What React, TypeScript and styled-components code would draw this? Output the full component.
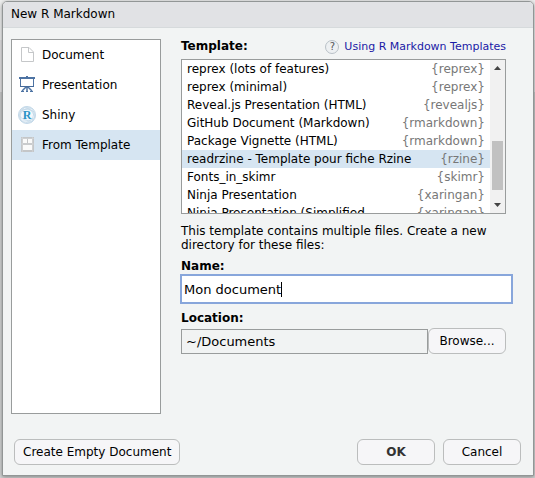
import React, { useState } from "react";
import styled, { createGlobalStyle } from "styled-components";

const GlobalStyle = createGlobalStyle`
  *, *::before, *::after { box-sizing: border-box; }
  html, body, #root { height: 100%; }
  body {
    margin: 0;
    background: linear-gradient(#eeefef 0 40px, #e1e2e3 40px 92px, #c9cbcb 92px 160px, #d3d5d5 160px);
    color: #000;
    font: 12px/14px "DejaVu Sans", Verdana, sans-serif;
  }
  button, input { font: inherit; color: inherit; margin: 0; }
`;

const Screen = styled.div`
  display: flex;
  min-height: 100%;
  padding: 1px 1px 2px 2px;
`;

const Dialog = styled.form`
  flex: 1;
  min-width: 0;
  display: flex;
  flex-direction: column;
  border: 1px solid #929696;
  border-radius: 5px 5px 0 0;
  background: #f2f4f4;
  box-shadow: 0 1px 4px rgba(0, 0, 0, 0.4);
`;

const TitleBar = styled.h1`
  margin: 0;
  padding: 5px 8px 6px;
  border-bottom: 1px solid #d6dadc;
  border-radius: 4px 4px 0 0;
  background: #e1e2e5;
  font-size: 12px;
  line-height: 14px;
  font-weight: normal;
`;

const Body = styled.div`
  flex: 1;
  display: flex;
  gap: 20px;
  padding: 11px 20px 25px 8px;
`;

const KindList = styled.div`
  flex: 0 0 150px;
  border: 1px solid #999c9c;
  background: #fff;
`;

const KindButton = styled.button<{ $selected: boolean }>`
  display: flex;
  align-items: center;
  gap: 5px;
  width: 100%;
  height: 30px;
  padding: 0 5px;
  border: 0;
  background: ${(p) => (p.$selected ? "#d6e5f2" : "transparent")};
  text-align: left;

  svg { flex: none; }
`;

const Fields = styled.div`
  flex: 1;
  min-width: 0;
  display: flex;
  flex-direction: column;
  align-items: stretch;
`;

const Section = styled.div`
  display: flex;
  flex-direction: column;
  margin-right: 7px;
`;

const Header = styled.div`
  display: flex;
  align-items: center;
  justify-content: space-between;
  height: 20px;
`;

const Caption = styled.label`
  font-weight: bold;
  line-height: 14px;
`;

const TemplateCaption = styled.span`
  font-weight: bold;
  padding-bottom: 6px;
`;

const HelpLink = styled.a`
  display: flex;
  align-items: center;
  gap: 5px;
  padding-bottom: 4px;
  color: #1a1aa6;
  font-size: 11px;
  text-decoration: none;
`;

const HelpMark = styled.span`
  display: grid;
  place-items: center;
  width: 14px;
  height: 14px;
  border: 1px solid #b9c1c7;
  border-radius: 50%;
  background: #edf0f2;
  color: #555;
  font-size: 10px;
  line-height: 12px;
`;

const TemplateBox = styled.div`
  display: flex;
  height: 155px;
  border: 1px solid #999c9c;
  background: #fff;
`;

const Templates = styled.div`
  flex: 1;
  min-width: 0;
  overflow: hidden;
`;

const TemplateRow = styled.button<{ $selected: boolean }>`
  display: flex;
  justify-content: space-between;
  gap: 8px;
  width: 100%;
  height: 18px;
  padding: 2px 5px;
  border: 0;
  background: ${(p) => (p.$selected ? "#d6e5f2" : "transparent")};
  text-align: left;
  line-height: 14px;
  white-space: nowrap;
`;

const PackageName = styled.span`
  color: #777;
`;

const ScrollTrack = styled.div`
  flex: 0 0 15px;
  display: flex;
  flex-direction: column;
  align-items: center;
  padding: 6px 0;
  background: #f1f1f1;
`;

const ScrollThumb = styled.div`
  width: 11px;
  height: 49px;
  margin: auto 0 13px;
  background: #c1c1c1;
`;

const Note = styled.p`
  margin: 10px 0 7px;
`;

const NameField = styled.div`
  position: relative;
  margin: 1px 0 7px -1px;
`;

const NameInput = styled.input`
  display: block;
  width: 100%;
  height: 30px;
  padding: 0 2px;
  border: 2px solid #88a6db;
  border-radius: 0;
  outline: 0;
  background: #fff;
  font-size: 13px;
  caret-color: transparent;
`;

const CaretLayer = styled.span`
  position: absolute;
  inset: 8px auto auto 4px;
  height: 15px;
  border-right: 1px solid #000;
  color: transparent;
  font-size: 13px;
  line-height: 15px;
  white-space: pre;
  pointer-events: none;
`;

const LocationRow = styled.div`
  display: flex;
  align-items: flex-end;
  margin-top: 3px;
`;

const LocationInput = styled.input`
  flex: 1;
  min-width: 0;
  height: 25px;
  padding: 0 4px;
  border: 1px solid #999c9c;
  border-radius: 0;
  background: #f1f3f3;
  font-size: 13px;
`;

const PushButton = styled.button<{ $bold?: boolean }>`
  min-width: 78px;
  height: 26px;
  padding: 0 8px;
  border: 1px solid #bbbdbd;
  border-radius: 6px;
  background: #f6f6f8;
  color: ${(p) => (p.$bold ? "#333" : "#000")};
  font-weight: ${(p) => (p.$bold ? "bold" : "normal")};
  white-space: nowrap;
`;

const Footer = styled.div`
  display: flex;
  gap: 8px;
  padding: 0 12px 10px 11px;
`;

const Spacer = styled.div`
  flex: 1;
`;

const DocumentIcon = () => (
  <svg width="20" height="20" viewBox="0 0 20 20" fill="#fff" stroke="#c5c7c9">
    <path d="M4.500 2.500H12L16.500 7V16.500H4.500Z" />
    <path d="M11.500 2.500V7.500H16.500" fill="none" />
  </svg>
);

const PresentationIcon = () => (
  <svg width="20" height="20" viewBox="0 0 20 20" fill="none" stroke="#4d73a3">
    <path d="M2 3H18" strokeWidth="2" />
    <path d="M10 1V3" strokeWidth="2" />
    <path d="M3.500 4V11.500H16.500V4" fill="#fff" />
    <path d="M3 11.500H17" stroke="#456a9a" />
    <path d="M10 12V16M9 12L5 16M11 12L15 16" strokeWidth="1.500" />
    <path d="M4 16.500H7M9 16.500H11M13 16.500H16" />
  </svg>
);

const ShinyIcon = () => (
  <svg width="20" height="20" viewBox="0 0 20 20" fill="none" stroke="#c3d8e8" strokeWidth="0.700">
    <circle cx="10" cy="10" r="8.500" fill="#f3f8fc" strokeWidth="1" />
    <path d="M4 4L8 2L14 3L17 7L18 12L15 17L9 18L4 16L2 11Z" />
    <path d="M4 4L14 5L18 12L13 16L4 16L3 7L8 2L17 7L15 17L6 14L2 11L6 5L14 3M9 18L16 13M3 7L10 3L17 7" />
    <text x="10" y="14" textAnchor="middle" fontFamily="Liberation Serif, serif" fontSize="12" fontWeight="bold" fill="#2c94c6" stroke="none">R</text>
  </svg>
);

const TemplateIcon = () => (
  <svg width="20" height="20" viewBox="0 0 20 20">
    <path d="M4 2H17V17H4Z" fill="#c4c6c8" />
    <path d="M6 4H10V8H6ZM11 4H15V8H11ZM6 10H15V15H6Z" fill="#fafafa" />
    <path d="M4 3.500H17M4 9H17M5.500 2V17M15.500 2V17" stroke="#d9dbdc" strokeWidth="0.500" />
  </svg>
);

const ArrowUp = () => (
  <svg width="7" height="4" viewBox="0 0 7 4" fill="#444"><path d="M3.500 0L7 4H0Z" /></svg>
);

const ArrowDown = () => (
  <svg width="7" height="4" viewBox="0 0 7 4" fill="#444"><path d="M0 0H7L3.500 4Z" /></svg>
);

const kinds = [
  { name: "Document", Icon: DocumentIcon },
  { name: "Presentation", Icon: PresentationIcon },
  { name: "Shiny", Icon: ShinyIcon },
  { name: "From Template", Icon: TemplateIcon },
];

const templates = [
  ["reprex (lots of features)", "reprex"],
  ["reprex (minimal)", "reprex"],
  ["Reveal.js Presentation (HTML)", "revealjs"],
  ["GitHub Document (Markdown)", "rmarkdown"],
  ["Package Vignette (HTML)", "rmarkdown"],
  ["readrzine - Template pour fiche Rzine", "rzine"],
  ["Fonts_in_skimr", "skimr"],
  ["Ninja Presentation", "xaringan"],
  ["Ninja Presentation (Simplified", "xaringan"],
];

export default function App() {
  const [kind, setKind] = useState("From Template");
  const [template, setTemplate] = useState(5);
  const [name, setName] = useState("Mon document");

  return (
    <>
      <GlobalStyle />
      <Screen>
        <Dialog role="dialog" aria-labelledby="title" onSubmit={(e) => e.preventDefault()}>
          <TitleBar id="title">New R Markdown</TitleBar>
          <Body>
            <KindList>
              {kinds.map(({ name: label, Icon }) => (
                <KindButton key={label} type="button" $selected={kind === label}
                  aria-pressed={kind === label} onClick={() => setKind(label)}>
                  <Icon />
                  {label}
                </KindButton>
              ))}
            </KindList>
            <Fields>
              <Section>
                <Header>
                  <TemplateCaption id="template-caption">Template:</TemplateCaption>
                  <HelpLink href="#templates">
                    <HelpMark aria-hidden="true">?</HelpMark>
                    Using R Markdown Templates
                  </HelpLink>
                </Header>
                <TemplateBox>
                  <Templates role="listbox" aria-labelledby="template-caption">
                    {templates.map(([title, pkg], i) => (
                      <TemplateRow key={title} type="button" role="option" aria-selected={template === i}
                        $selected={template === i} onClick={() => setTemplate(i)}>
                        <span>{title}</span>
                        <PackageName>{`{${pkg}}`}</PackageName>
                      </TemplateRow>
                    ))}
                  </Templates>
                  <ScrollTrack aria-hidden="true">
                    <ArrowUp />
                    <ScrollThumb />
                    <ArrowDown />
                  </ScrollTrack>
                </TemplateBox>
                <Note>This template contains multiple files. Create a new directory for these files:</Note>
              </Section>
              <Caption htmlFor="name">Name:</Caption>
              <NameField>
                <NameInput id="name" type="text" value={name} onChange={(e) => setName(e.target.value)} />
                <CaretLayer aria-hidden="true">{name}</CaretLayer>
              </NameField>
              <Section>
                <Caption htmlFor="location">Location:</Caption>
                <LocationRow>
                  <LocationInput id="location" type="text" readOnly value="~/Documents" />
                  <PushButton type="button">Browse...</PushButton>
                </LocationRow>
              </Section>
            </Fields>
          </Body>
          <Footer>
            <PushButton type="button">Create Empty Document</PushButton>
            <Spacer />
            <PushButton type="submit" $bold>OK</PushButton>
            <PushButton type="button">Cancel</PushButton>
          </Footer>
        </Dialog>
      </Screen>
    </>
  );
}
